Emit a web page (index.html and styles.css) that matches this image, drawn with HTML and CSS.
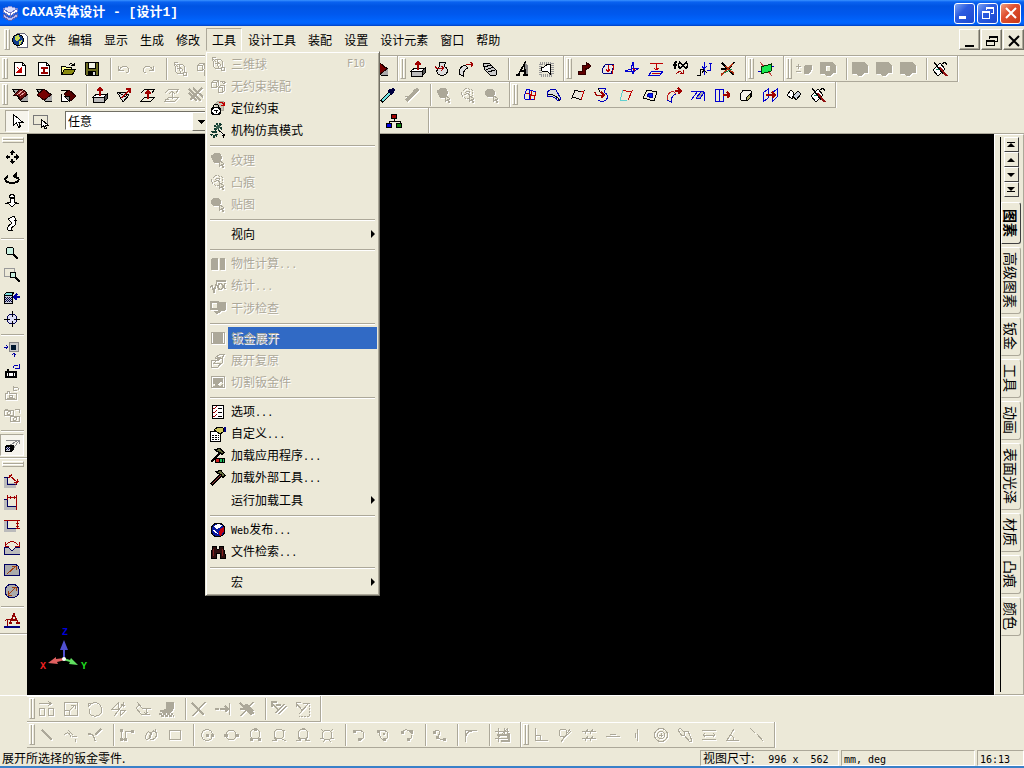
FILE: index.html
```html
<!DOCTYPE html>
<html lang="zh-CN">
<head>
  <meta charset="UTF-8" />
  <meta name="viewport" content="width=device-width, initial-scale=1.0"/>
  <title>CAXA实体设计 - [设计1]</title>
  <link rel="stylesheet" href="styles.css">
</head>
<body>
  <!-- icon sprite -->
  <svg class="sprite" aria-hidden="true">
    <symbol id="logo" viewBox="0 0 16 16"><path fill="#d8dcff" stroke="#8890d8" d="M1 4l7-3 7 3-7 4z"/><path fill="#fff" stroke="#7078c8" d="M1 4l7 4v3L1 7zM15 4L8 8v3l7-4z"/><path fill="#b8b8f0" stroke="#5860b0" d="M1 9l7 4 7-4v3l-7 4-7-4z"/></symbol>
    <symbol id="doc" viewBox="0 0 16 16"><path fill="#fff" stroke="#667" d="M5.500 1.500h7l3 3v11h-10z"/><circle cx="6" cy="8" r="5.500" fill="#123c8c" stroke="#000"/><path fill="#c8d850" stroke="none" d="M3 4l4-1 1 3-3 3-2-1zM7 9l3-1-1 4-2 1z"/></symbol>
    <symbol id="new" viewBox="0 0 16 16"><path fill="#fff" stroke="#000" d="M2.500 1.500h8l3 3v10h-11z"/><path stroke="#000" d="M10.500 1.500v3h3"/><path fill="#c00000" stroke="#c00000" d="M5 6l4 4M9.500 7v4h-4z"/></symbol>
    <symbol id="newi" viewBox="0 0 16 16"><path fill="#fff" stroke="#000" d="M2.500 1.500h8l3 3v10h-11z"/><path stroke="#000" d="M10.500 1.500v3h3"/><path stroke="#900" stroke-width="2" d="M4.500 6.500h7M8 6v6M4.500 12h7"/></symbol>
    <symbol id="open" viewBox="0 0 16 16"><path fill="#ffff90" stroke="#000" d="M1.500 13.500v-8h4l1 1h5v2"/><path fill="#8a8a10" stroke="#000" d="M1.500 13.500l3-5h11l-3 5z"/><path stroke="#000" d="M9 3.500q3-2 5 1m0-3v3h-3"/></symbol>
    <symbol id="save" viewBox="0 0 16 16"><path fill="#6a6a20" stroke="#000" d="M1.500 1.500h13v13h-12l-1-1z"/><path fill="#f4f4e8" stroke="#000" d="M4.500 1.500h7v6h-7z"/><path fill="#000" stroke="none" d="M4 10h8v5H4z"/><path fill="#ddd" stroke="none" d="M9 11h2v3H9z"/></symbol>
    <symbol id="undo" viewBox="0 0 16 16"><path d="M2.500 4.500v5h5M3 9q4-6 8-3 4 4-1 6"/></symbol>
    <symbol id="redo" viewBox="0 0 16 16"><path d="M13.500 4.500v5h-5M13 9Q9 3 5 6q-4 4 1 6"/></symbol>
    <symbol id="triball" viewBox="0 0 16 16"><circle cx="8" cy="8" r="5"/><path d="M2 5V1.500h4M2 2l4 4M5 8q4-3 6 2M8 4q-2 4 1 8M11 11h3v3h-3z"/></symbol>
    <symbol id="assemble" viewBox="0 0 16 16"><path d="M1.500 4.500h5v5h-5zM1.500 4.500l2-2h5v5l-2 2M6.500 4.500l2-2M8.500 9.500h4v5h-4zM8.500 9.500l2-2h4v5l-2 2M10 3.500h4v2M12 4l2 2 2-2"/></symbol>
    <symbol id="lock" viewBox="0 0 16 16"><path fill="#c8c4b4" stroke="#aca899" d="M5 4l3-3h5v9h-6"/><path stroke="#c00000" d="M9 3q3-2 5 2m0-3v3h-3"/><rect x="1.500" y="7.500" width="9" height="7" rx="3" fill="#fff" stroke="#000" stroke-width="1.500"/><path stroke="#000" d="M3.500 7q0-3 2.500-3t2.500 3M4 10.500h4M6 11v2"/></symbol>
    <symbol id="gears" viewBox="0 0 16 16"><circle cx="8" cy="5" r="3" stroke="#123c30" stroke-width="3" stroke-dasharray="2 1"/><circle cx="8" cy="5" r="2" fill="#386050" stroke="none"/><circle cx="4" cy="12" r="2.500" stroke="#123c30" stroke-width="2.500" stroke-dasharray="2 1"/><path fill="#fff" stroke="#000" d="M9.500 9l5 4-2 .5 1.500 2"/></symbol>
    <symbol id="texture" viewBox="0 0 16 16"><path fill="currentColor" d="M1 4l5-3 4 1 2 4-3 4H4z"/><path fill="#ece9d8" d="M9 8l5 4-2 .5 2 2.500-1 .5-2-2.500-1.500 1z"/></symbol>
    <symbol id="bump" viewBox="0 0 16 16"><path stroke-dasharray="2 1" d="M1 6l5-5 6 2 1 5-6 4-4-2z"/><path d="M5 6q3-4 5 0M4 8q4-3 6 0"/><path fill="#ece9d8" d="M9 8l5 4-2 .5 2 2.500-1 .5-2-2.500-1.500 1z"/></symbol>
    <symbol id="decal" viewBox="0 0 16 16"><ellipse cx="6" cy="6" rx="5" ry="4" fill="currentColor"/><path fill="#ece9d8" d="M9 8l5 4-2 .5 2 2.500-1 .5-2-2.500-1.500 1z"/></symbol>
    <symbol id="mass" viewBox="0 0 16 16"><path fill="currentColor" stroke="none" d="M1 3l2-1h5v12H1zM10 2h5v12h-5z"/></symbol>
    <symbol id="stats" viewBox="0 0 16 16"><path stroke-width="1.500" d="M0 9l2-1 2 6 3-11h9"/><path stroke-width="1.500" d="M15 5q-3 8-6 6-2-3 0-5 3-2 6 5"/></symbol>
    <symbol id="interfere" viewBox="0 0 16 16"><path stroke-width="1.500" d="M1 2h7v7H1z"/><path fill="currentColor" d="M8 3l2-1h5v8l-4 1-3-2zM4 11l3 3 5-4"/></symbol>
    <symbol id="unfold" viewBox="0 0 16 16"><path fill="currentColor" stroke="none" d="M3 3h10v10H3z"/><path d="M1 2.500h14M1 13.500h14M1.500 2v12M14.500 2v12"/></symbol>
    <symbol id="refold" viewBox="0 0 16 16"><path d="M5 6l5-4h5l-4 5zM1 8h6l-3 3h7l-3 4H1zM1 8v7M12 6v5l-3 3"/><path fill="currentColor" d="M8 5h3l-2 3H7z"/></symbol>
    <symbol id="cutsheet" viewBox="0 0 16 16"><path d="M1.500 2.500h13v11h-13z"/><path fill="currentColor" stroke="none" d="M3 4h10v5l-3-1-3 3-4-1zM3 12l4-1 3 1 3-2v3H3z"/></symbol>
    <symbol id="options" viewBox="0 0 16 16"><path fill="#fff" stroke="#000" d="M2.500 1.500h11v13h-11z"/><path stroke="#900" d="M3 4l1 1 3-3M3 8l1 1 3-3M3 12l1 1 3-3"/><path stroke="#000" d="M8 4.500h4M8 8.500h4M8 12.500h4"/></symbol>
    <symbol id="custom" viewBox="0 0 16 16"><path fill="#fff" stroke="#000" d="M.5 5.500h10v10H.5z"/><path stroke="#000" stroke-dasharray="2 1" d="M2 9.500h7M2 11.500h7M2 13.500h7"/><path fill="#d0c860" stroke="#000" d="M4 4l4-3 5 1v4l-3 2-3-2z"/><path stroke="#000080" stroke-width="2" d="M15 1v5"/></symbol>
    <symbol id="hammer" viewBox="0 0 16 16"><path stroke="#000" stroke-width="3" d="M1 15L11 5"/><path stroke="#a04040" d="M1.500 14.500L11 5"/><path fill="#687040" stroke="#000" d="M6 1.500l5-1 4 5-2 2-2-3-3-1z"/></symbol>
    <symbol id="loadapp" viewBox="0 0 16 16"><path stroke="#000" stroke-width="2" d="M1 14L10 5"/><path fill="#687040" stroke="#000" d="M5 1.500l5-1 4 4-2 2-2-2-3-1z"/><path fill="#d02020" stroke="#000" d="M5.500 10.500h4v4h-4z"/><path fill="#20c060" stroke="#000" d="M9.500 10.500h5v4h-5zM12 11v3"/></symbol>
    <symbol id="web" viewBox="0 0 16 16"><circle cx="8" cy="8" r="7" fill="#0818a0" stroke="#000"/><path fill="#fff" stroke="none" d="M4 4l4-2 4 1-2 3-4 1zM3 8l3 1 2 3-3-1z"/><path fill="#c00010" stroke="none" d="M10 7l4-2 .5 4-4 5-2-2z"/></symbol>
    <symbol id="find" viewBox="0 0 16 16"><path fill="#301010" stroke="#000" d="M3 2h3l1 3h2l1-3h3l2 8v4h-5v-5H6v5H1v-4z"/><path stroke="#802020" d="M4 5l-1 7M12 5l1 7"/></symbol>
    <symbol id="extrude" viewBox="0 0 16 16"><path fill="#fff" stroke="#000" d="M1 10l4-3h10l-3 3z"/><path fill="#bbb" stroke="#000" d="M1 10h11v5H1z"/><path fill="#555" stroke="#000" d="M12 10l3-3v5l-3 3z"/><path stroke="#a00000" stroke-width="2" d="M8 9V2M5 4l3-3 3 3"/></symbol>
    <symbol id="revolve" viewBox="0 0 16 16"><path fill="#ddd" stroke="#000" d="M5 1h7l-2 4q6 4 2 8-4 3-8 0-3-4 2-8z"/><path stroke="#a00000" d="M1 5q1 4 8 2m-2-2l3 2-3 3"/></symbol>
    <symbol id="revolveb" viewBox="0 0 16 16"><path stroke="#0000c0" d="M5 1h7l-2 4q6 4 2 8-4 3-8 0"/><path stroke="#000" d="M5 1q-1 2 1 4"/><path stroke="#a00000" stroke-width="1.500" d="M1 5q0 5 8 3m-2-3l3 3-3 3"/></symbol>
    <symbol id="sweep" viewBox="0 0 16 16"><path fill="#ddd" stroke="#000" d="M1 13q0-7 6-9l3 3q-5 2-5 8z"/><path stroke="#a00000" d="M8 4l7-1m-3-2l3 2-2 3"/></symbol>
    <symbol id="sweepb" viewBox="0 0 16 16"><path stroke="#c02020" d="M1 13q0-7 6-9l3 3"/><path stroke="#0000c0" d="M10 7q-5 2-5 8l-4-2"/><path stroke="#a00000" stroke-width="1.500" d="M9 4h6m-3-3l3 3-3 3"/></symbol>
    <symbol id="loft" viewBox="0 0 16 16"><path fill="#ccc" stroke="#000" d="M1 3l6-1 8 8-1 4-5 1-6-6z"/><path stroke="#000" d="M2 6l7-2M4 9l7-3M6 11l7-2"/></symbol>
    <symbol id="texta" viewBox="0 0 16 16"><path stroke="#000" stroke-width="1.500" d="M2 14h4M4 14L11 2v12M6 10h5M9 14h5"/><path fill="#888" stroke="none" d="M11 2l3 2v9h-2z"/></symbol>
    <symbol id="selshape" viewBox="0 0 16 16"><path stroke="#999" stroke-dasharray="1 1" stroke-width="3" d="M2 2h12v12H2z"/><path fill="#fff" stroke="#000" d="M3 6h3l4-3h2v10l-3-3H4z"/></symbol>
    <symbol id="bend" viewBox="0 0 16 16"><path fill="#600000" stroke="#300000" d="M2 10h4V4h4V1l5 4-5 4V7H9v6H2z"/></symbol>
    <symbol id="surface" viewBox="0 0 16 16"><path fill="#e8e8e8" stroke="#000080" d="M2 8l4-5 8 1-3 9-8-1z"/><path stroke="#c00000" d="M8 4v7M12 4l2 1-2 8M6 8l2 3 2-3"/></symbol>
    <symbol id="plane3" viewBox="0 0 16 16"><path stroke="#0000d0" d="M1 10l6-2 8-1-6 4zM7 8l2-7v12z"/><path stroke="#c00000" d="M9 7l2 3"/></symbol>
    <symbol id="project" viewBox="0 0 16 16"><path stroke="#c00000" d="M2 2.500h13M8 3v6M6 7l2 2 3-2"/><path stroke="#0000d0" d="M1 14l3-4h11l-3 4z"/><path stroke="#c00000" d="M4 12.500h8"/></symbol>
    <symbol id="fx" viewBox="0 0 16 16"><path stroke="#000" stroke-width="1.500" d="M5 1Q3 0 3 3v5M1 4h4M8 1Q5 4 8 8M9 2l4 5M13 2L9 7M14 1q3 3 0 7"/><path stroke="#a00000" d="M4 13q3-4 6-1m1-3v3H8"/></symbol>
    <symbol id="combine" viewBox="0 0 16 16"><path stroke="#0000d0" d="M8 1v13M6 5l2 3 3-3M11 9h3V2M13 2h3"/><path stroke="#000" d="M1 14h3V8h4M6 12l2-3 3 3"/></symbol>
    <symbol id="trim" viewBox="0 0 16 16"><path stroke="#000" stroke-width="1.500" d="M2 2l12 12M1 8h8L14 1"/><path stroke="#b03010" stroke-width="1.500" d="M1 14L13 3M6 5l3 4 5 3"/><path stroke="#108040" d="M4 12l8-4"/></symbol>
    <symbol id="green" viewBox="0 0 16 16"><path stroke="#c04040" d="M2 1l12 14"/><path stroke="#0000c0" d="M0 11l16-6"/><path fill="#18e850" stroke="#003800" d="M3 6l10-3v7L3 13z"/></symbol>
    <symbol id="plusminus" viewBox="0 0 16 16"><path d="M0 5.500h5M2.500 3v5M0 10.500h5"/><path fill="currentColor" d="M8 6l3-2h4v5l-2 3H8z"/></symbol>
    <symbol id="hollow" viewBox="0 0 16 16"><path fill="currentColor" stroke="none" fill-rule="evenodd" d="M0 1h12l4 3v8h-3l-2 3H6l-2-2H0zM6 5v5h4V5z"/></symbol>
    <symbol id="solid" viewBox="0 0 16 16"><path fill="currentColor" stroke="none" d="M0 1h12l4 3v8h-4l-2 3H6l-2-2H0z"/></symbol>
    <symbol id="sketch" viewBox="0 0 16 16"><path fill="#fff" stroke="#000" d="M1 9l7-7 5 6-7 7z"/><path stroke="#108060" d="M4 8h6v4"/><path stroke="#901010" stroke-width="2" d="M7 6l8 9"/><path stroke="#000" d="M2 1l9 12M9 4l4-3 2 3"/></symbol>
    <symbol id="fillet" viewBox="0 0 16 16"><path fill="#aaa" stroke="#000" d="M0 2h8l8 6v6H9z"/><path fill="#701010" stroke="#200" d="M2 8l6-6q8 2 7 6l-7 5q0-5-6-5z"/><path stroke="#e8a0a0" d="M5 8l6-5M8 9l5-4"/></symbol>
    <symbol id="chamfer" viewBox="0 0 16 16"><path fill="#aaa" stroke="#000" d="M0 2h8l8 6v6H9z"/><path fill="#780000" stroke="#200" d="M1 8l7-6 7 6-7 5z"/></symbol>
    <symbol id="shell" viewBox="0 0 16 16"><path fill="#fff" stroke="#000" d="M1 3h7M1 7v7h7"/><path fill="#580000" stroke="#200" d="M4 7l5-4 7 6-5 5z"/><path fill="#888" stroke="#000" d="M4 9h5v5z"/></symbol>
    <symbol id="draft" viewBox="0 0 16 16"><path fill="#ddd" stroke="#000" d="M1 5h7l4 5-5 5-3-5z"/><path stroke="#000" d="M8 5l5 3-6 7M2 5l8 5"/><path stroke="#a00000" stroke-width="1.500" d="M6 11l8-9m-4 0h4v4"/></symbol>
    <symbol id="offset" viewBox="0 0 16 16"><path stroke="#000" d="M1 6l4-4h10l-3 4M1 14l4-4h10l-4 4z"/><path stroke="#a00000" stroke-width="2" d="M8 12V5M5 7l3-3 3 3"/></symbol>
    <symbol id="offsetg" viewBox="0 0 16 16"><path d="M1 6l4-4h10l-3 4M1 14l4-4h10l-4 4zM8 12V5M5 7l3-3 3 3M1 12h4"/></symbol>
    <symbol id="hatch" viewBox="0 0 16 16"><path stroke-width="2" d="M1 2l12 12M5 1l10 9M1 6l8 8M14 1L2 13"/></symbol>
    <symbol id="brush" viewBox="0 0 16 16"><path stroke="#000" stroke-width="3" d="M1 15L10 6"/><path stroke="#70e0e0" stroke-width="1.500" d="M2 14L10 6"/><path stroke="#000040" stroke-width="3" d="M9 3l4 4M11 5l3-3"/></symbol>
    <symbol id="brushg" viewBox="0 0 16 16"><path stroke-width="3" d="M2 14l8-8M10 3l3 3M12 4l2-2"/><path d="M1 10l5-1"/></symbol>
    <symbol id="mesh" viewBox="0 0 16 16"><path stroke="#0000d0" d="M2 9l3-7 9 3-2 8-9-1zM8 3L7 13"/><path stroke="#c00000" d="M4 6l9 3M10 4l-2 9M14 5l-2 8"/></symbol>
    <symbol id="ruled" viewBox="0 0 16 16"><path fill="#ddd" stroke="#0000b0" d="M1 7q1-6 9-4l5 9-3 2q-4-6-10-4z"/><path stroke="#000" d="M2 8q7-2 12 6"/></symbol>
    <symbol id="bound" viewBox="0 0 16 16"><path fill="#e8e4d8" stroke="#000" d="M2 11l3-8q4 2 9 1l-3 9q-4-3-9-2z"/><path stroke="#c00000" d="M11 4h3l-3 9"/></symbol>
    <symbol id="cyan" viewBox="0 0 16 16"><path stroke="#60d0d0" d="M2 13l3-10M2 13h7"/><path stroke="#c00000" d="M5 3q4 2 9 1l-4 9"/></symbol>
    <symbol id="bluefill" viewBox="0 0 16 16"><path stroke="#000" d="M1 11l4-8 10 2-3 9z"/><path fill="#0020ff" stroke="#0000a0" d="M5 9l2-3 4 1-1 4z"/></symbol>
    <symbol id="vex" viewBox="0 0 16 16"><path fill="#aaa" stroke="#0000d0" d="M6 11l6-7 2 1-4 7z"/><path stroke="#0000d0" d="M1 4h11M1 13L8 4M14 5l1 9"/></symbol>
    <symbol id="boxarrow" viewBox="0 0 16 16"><path stroke="#0000d0" d="M1.500 2.500h8v12h-8zM5.500 3v11"/><path stroke="#a00000" stroke-width="2" d="M9 8h6m-2-3l3 3-3 3"/></symbol>
    <symbol id="curl" viewBox="0 0 16 16"><path fill="#f4f2e8" stroke="#000" d="M2 8l3-5 8 1v6l-4 4-6-1z"/><path fill="#b0b060" stroke="#000" d="M8 11l4-4v4l-3 3z"/></symbol>
    <symbol id="mirror" viewBox="0 0 16 16"><path stroke="#0000d0" d="M1 6l5-4v9l-5 4zM10 6l5-4v8l-5 5z"/><path stroke="#a00000" stroke-width="1.500" d="M4 8h8m-2-3l3 3-3 3"/></symbol>
    <symbol id="joint" viewBox="0 0 16 16"><path fill="#fff" stroke="#000" d="M1 8l4-5 3 3-2 6z"/><path fill="#c8d0dc" stroke="#000" d="M7 9l5-5 3 3-5 6z"/></symbol>
    <symbol id="tree" viewBox="0 0 16 16"><path stroke="#000" d="M8.500 5v4M3 11V8.500h11V11"/><path fill="#a00000" stroke="#000" d="M5.500 1.500h5v4h-5z"/><path fill="#0000e0" stroke="#000" d="M.5 10.500h5v4h-5z"/><path fill="#108010" stroke="#000" d="M10.500 10.500h5v4h-5z"/></symbol>
    <symbol id="arrow" viewBox="0 0 16 16"><path fill="#fff" stroke="#000" d="M4.500 1.500v11l3-3 2 5 2-1-2-4.500h4z"/></symbol>
    <symbol id="boxsel" viewBox="0 0 16 16"><path stroke="#777" d="M.5 2.500h14v9H.5z"/><path fill="#fff" stroke="#000" d="M8.500 6.500v8l2-2 1.500 3 1.500-.5-1.500-3h3z"/></symbol>
    <symbol id="pan" viewBox="0 0 16 16"><path fill="#000" stroke="none" d="M8 1l3 3H9v2H7V4H5zM8 15l3-3H9v-2H7v2H5zM1 8l3-3v2h2v2H4v2zM15 8l-3-3v2h-2v2h2v2z"/></symbol>
    <symbol id="orbit" viewBox="0 0 16 16"><path stroke="#000" stroke-width="2" d="M4 5q-5 3-1 6 5 2 10 0 4-3-1-5"/><path fill="#000" stroke="#000" d="M9 5l3-3v5z"/></symbol>
    <symbol id="fly" viewBox="0 0 16 16"><path fill="#fff" stroke="#000" d="M6.500 1h3l1 3h-5zM6 5h4v4h3l-5 5-5-5h3zM1 10l3 1M15 10l-3 1"/></symbol>
    <symbol id="walk" viewBox="0 0 16 16"><path fill="#fff" stroke="#000" d="M4 4l6-3 2 4h-2q4 3 0 6-3 1-2 4H4q-1-4 3-6 2-1-1-3z"/></symbol>
    <symbol id="zoom" viewBox="0 0 16 16"><circle cx="6" cy="6" r="4" fill="#c8f0e0" stroke="#000"/><path stroke="#000" stroke-width="2" d="M9 9l5 5"/></symbol>
    <symbol id="zoomwin" viewBox="0 0 16 16"><path stroke="#999" d="M.5 1.500h10v8H.5z"/><circle cx="9" cy="8" r="3" fill="#c8f0e0" stroke="#000"/><path stroke="#000" stroke-width="2" d="M11 10l5 5"/></symbol>
    <symbol id="lookat" viewBox="0 0 16 16"><path fill="#80e0e0" stroke="#000" d="M0 6l3-3h7L8 6z"/><path fill="#c8ccd8" stroke="#000" d="M.5 6.500h8v8h-8z"/><path stroke="#000040" stroke-dasharray="1 1" d="M1 8.500h7M2 9.500h6M1 10.500h7M2 11.500h6M1 12.500h7"/><path stroke="#0000a0" stroke-width="1.500" d="M16 8h-5m2-3l-3 3 3 3"/></symbol>
    <symbol id="target" viewBox="0 0 16 16"><circle cx="8" cy="8" r="5" fill="#ddddf4" stroke="#000050"/><path stroke="#000" d="M8 0v6M8 10v6M0 8h6M10 8h6"/></symbol>
    <symbol id="fit" viewBox="0 0 16 16"><path fill="#ccc" stroke="#888" d="M5.500 1.500h9v9h-9z"/><path fill="#001830" stroke="none" d="M7 4h5v5H7z"/><path stroke="#0000a0" d="M0 6h4M2 4l2 2-2 2M10 16v-4M8 14l2-2 2 2"/></symbol>
    <symbol id="cam" viewBox="0 0 16 16"><path fill="#000" stroke="none" d="M1 8h2V6h2v2h8v7H1z"/><circle cx="7" cy="11.500" r="2" fill="#fff" stroke="none"/><path fill="#fff" stroke="none" d="M3 10h1v3H3zM10 10h1v3h-1z"/><path stroke="#0000b0" d="M9 5q0-4 5-2m1-2v4h-4"/></symbol>
    <symbol id="camg" viewBox="0 0 16 16"><path d="M1.500 8.500h2v-2h2v2h7v6h-11zM3 13h8"/><circle cx="7" cy="11.500" r="1.500"/><path d="M15 5q0-4-5-2M9 1v4h4"/></symbol>
    <symbol id="cams" viewBox="0 0 16 16"><path d="M.5 3.500h9v5h-9zM1 2h3M11 2h4v4M6.500 9.500h9v5h-9z"/><circle cx="5" cy="6" r="1.500"/><circle cx="11" cy="12" r="1.500"/></symbol>
    <symbol id="persp" viewBox="0 0 16 16"><path stroke="#888" d="M2 3.500h13L9 12M15 3L4 9M15 3v4"/><path fill="#000" stroke="#000" d="M1 10l2-2h6v5l-2 2z"/><path fill="#c8ccd8" stroke="#000" d="M1.500 9.500h5v5h-5z"/><path stroke="#000040" stroke-dasharray="1 1" d="M2 10.500h4M3 11.500h3M2 12.500h4"/></symbol>
    <symbol id="dimalign" viewBox="0 0 16 16"><path fill="#bbb" stroke="none" d="M0 4h4v6h8v5H0z"/><path stroke="#000060" d="M0 4.500h3.500v7H13"/><path stroke="#a00000" d="M6 3l7 6M5 5V2h3M13 6v3h-3M11 12l4-4M4 5l4-4"/></symbol>
    <symbol id="dimh" viewBox="0 0 16 16"><path fill="#bbb" stroke="none" d="M0 5h4v7h8v3H0z"/><path stroke="#000060" d="M3.500 5v6.500H12M0 4.500h4"/><path stroke="#a00000" d="M3.500 0v5M12.500 0v15M4 2.500h8M6 1v3M10 1v3"/></symbol>
    <symbol id="dimv" viewBox="0 0 16 16"><path fill="#bbb" stroke="none" d="M0 4h4v7h8v4H0z"/><path stroke="#000060" d="M3.500 4v7.500H12"/><path stroke="#a00000" d="M0 3.500h16M12 11.500h4M13.500 4v8M12 6h3M12 9.500h3"/></symbol>
    <symbol id="dimang" viewBox="0 0 16 16"><path fill="#bbb" stroke="#000060" d="M0 8h4l4 4 4-4h4v7H0z"/><path stroke="#a00000" d="M2 6q6-7 12 0M1 3v4h4M15 3v4h-4"/></symbol>
    <symbol id="dimrad" viewBox="0 0 16 16"><path fill="#aaa" stroke="#000060" d="M0 3h10q5 1 5 5v6H0z"/><path stroke="#a04010" d="M3 13l9-8M8 5h4v4"/></symbol>
    <symbol id="dimdia" viewBox="0 0 16 16"><circle cx="8" cy="8" r="7" fill="#aaa" stroke="#000060"/><path stroke="#a04010" d="M4 12l8-8M8 4h4v4M4 8v4h4"/></symbol>
    <symbol id="note" viewBox="0 0 16 16"><path stroke="#900000" stroke-width="1.500" d="M6 10l4-9 4 9M8 7h5M5 10h3M12 10h4"/><path stroke="#900000" d="M3.500 13V6.500h4M1 8l2-2"/><path stroke="#000080" stroke-width="2" d="M0 14h16"/></symbol>
    <!-- sketch tools, drawn in the current colour -->
    <symbol id="s-move" viewBox="0 0 16 16"><path d="M0 2.500h11M9 0l3 2.500L9 5M.5 7.500h5v7h-5zM9.500 7.500h5v7h-5z"/></symbol>
    <symbol id="s-scale" viewBox="0 0 16 16"><path d="M1.500 1.500h13v13h-13zM1.500 9.500h5v5M6 10l6-6M8 4h4v4"/></symbol>
    <symbol id="s-rot" viewBox="0 0 16 16"><path d="M3 4q5-5 10 0 4 6-1 10-6 3-10-2V8M1 6V2h4z"/></symbol>
    <symbol id="s-mir" viewBox="0 0 16 16"><path d="M1 8l6-6v6zM3 15L13 2M9 9h6l-6 6zM10 3l4 2M12 1v5"/></symbol>
    <symbol id="s-off" viewBox="0 0 16 16"><path d="M2 1l5 6h9M1 7l5 6h9M1 7l3-3M11 8v4M9 11l2 2 2-2"/></symbol>
    <symbol id="s-proj" viewBox="0 0 16 16"><path fill="currentColor" d="M7 1h7v6H7zM6 8h8l-2 3H4z"/><path stroke-dasharray="3 1" stroke-width="2" d="M1 10h5M0 12.500h14M2 15h13"/></symbol>
    <symbol id="s-x" viewBox="0 0 16 16"><path stroke-width="1.500" d="M1 2l12 12M14 1L2 15"/></symbol>
    <symbol id="s-ext" viewBox="0 0 16 16"><path stroke-width="1.500" d="M0 8h4M5 8h9M14.500 2v12M10 5l3 3-3 3"/></symbol>
    <symbol id="s-cut" viewBox="0 0 16 16"><path stroke-width="1.500" d="M1 2l12 12M14 1L2 15M6 4l9 9M8 3l6 7M1 8h7"/></symbol>
    <symbol id="s-dim" viewBox="0 0 16 16"><path stroke-width="1.500" d="M1 2l6 7M8 13l7-8M5 12l8-9M1 6V1h5M5 4h5"/></symbol>
    <symbol id="s-dim2" viewBox="0 0 16 16"><path d="M1 2l6 7M1 6V1h5M4 13l9-10M8 2.500h7"/><path stroke-dasharray="2 1" d="M14.500 4v11H4"/></symbol>
    <symbol id="s-line" viewBox="0 0 16 16"><path stroke-width="1.500" d="M3 3l10 10"/></symbol>
    <symbol id="s-tan" viewBox="0 0 16 16"><path d="M1 8q5-5 7 2M5 3l5 5M9 10l5-1M12 12v3"/></symbol>
    <symbol id="s-norm" viewBox="0 0 16 16"><path stroke-width="1.500" d="M1 7q6-1 7 7M8 8l6-6"/></symbol>
    <symbol id="s-poly" viewBox="0 0 16 16"><path d="M2.500 3v10M2 12.500h4M6.500 13V4.500H12"/><path fill="currentColor" stroke="none" d="M1 2h3v3H1zM1 11h3v3H1zM5 11h3v3H5zM12 3h3v3h-3z"/></symbol>
    <symbol id="s-curve" viewBox="0 0 16 16"><path d="M3 8q2-5 5-2 1 4-4 7Q1 11 3 8zM7 8q2-6 6-3 2 5-4 8-4-1-2-5zM12 2v4"/></symbol>
    <symbol id="s-rect" viewBox="0 0 16 16"><path d="M2.500 3.500h11v9h-11z"/></symbol>
    <symbol id="s-c1" viewBox="0 0 16 16"><circle cx="8" cy="8" r="5.500"/><path fill="currentColor" d="M7 7h2v2H7zM12 7h2v2h-2z"/></symbol>
    <symbol id="s-c2" viewBox="0 0 16 16"><circle cx="8" cy="8" r="5"/><path fill="currentColor" d="M1 7h3v2H1zM12 7h3v2h-3z"/></symbol>
    <symbol id="s-c3" viewBox="0 0 16 16"><circle cx="8" cy="7" r="5"/><path fill="currentColor" d="M7 1h2v2H7zM3 11h2v2H3zM11 11h2v2h-2z"/></symbol>
    <symbol id="s-c4" viewBox="0 0 16 16"><circle cx="8" cy="7" r="5"/><path d="M1 13h5M3 10l3 4M11 12l4 2M12 4l2-1"/></symbol>
    <symbol id="s-c5" viewBox="0 0 16 16"><circle cx="8" cy="7" r="5"/><path d="M1 13h5M10 13h5M3 10l3 4M13 10l-3 4M7 1h3"/></symbol>
    <symbol id="s-c6" viewBox="0 0 16 16"><circle cx="8" cy="8" r="5"/><path d="M2 2l3 3M14 2l-3 3M1 12l4-1M11 11l4 1M4 15l2-2M12 15l-2-2"/></symbol>
    <symbol id="s-arc1" viewBox="0 0 16 16"><path d="M3 4q9-3 10 4 0 3-4 5"/><path fill="currentColor" stroke="none" d="M2 3h3v3H2zM7 11h3v3H7z"/></symbol>
    <symbol id="s-arc2" viewBox="0 0 16 16"><path d="M3 4q9-3 10 4 0 3-4 5-5-2-5-9"/><path fill="currentColor" stroke="none" d="M2 3h3v3H2zM8 11h3v3H8zM8 6h2v2H8z"/></symbol>
    <symbol id="s-arc3" viewBox="0 0 16 16"><path d="M3 5q2-3 5-2 6 2 5 5 0 3-3 5"/><path fill="currentColor" stroke="none" d="M2 4h3v3H2zM8 11h3v3H8zM11 3h3v3h-3z"/></symbol>
    <symbol id="s-spl" viewBox="0 0 16 16"><path d="M3 5q4-4 6 0-1 4-3 5 4 4 8 2"/><path fill="currentColor" stroke="none" d="M2 4h3v3H2zM5 9h3v3H5zM12 11h3v3h-3z"/></symbol>
    <symbol id="s-fil" viewBox="0 0 16 16"><path d="M2 3.500h12M2.500 3v12M3 9q1-5 6-5"/></symbol>
    <symbol id="s-grid" viewBox="0 0 16 16"><path d="M0 4.500h14M0 11.500h14M3.500 1v14M9 1v8M12 1v10M3 11l9-9"/><path stroke-width="2" d="M2 8h13M14 6v8H6"/></symbol>
    <symbol id="s-perp" viewBox="0 0 16 16"><path d="M2.500 1v12.500H15M2.500 8.500h5v5"/></symbol>
    <symbol id="s-tang" viewBox="0 0 16 16"><circle cx="6" cy="6" r="4"/><path d="M4 15L13 2M9 9l5-5"/></symbol>
    <symbol id="s-par" viewBox="0 0 16 16"><path d="M1 4.500h14M1 11.500h14M4 7l3-5M9 7l3-5M4 14l3-5M9 14l3-5"/></symbol>
    <symbol id="s-hor" viewBox="0 0 16 16"><path d="M1 9.500h14M5 7.500h6"/></symbol>
    <symbol id="s-ver" viewBox="0 0 16 16"><path d="M8.500 2v12M6.500 6v5"/></symbol>
    <symbol id="s-con" viewBox="0 0 16 16"><circle cx="8" cy="8" r="6.500"/><circle cx="8" cy="8" r="3.500"/><path d="M6 8h4M8 6v4"/></symbol>
    <symbol id="s-eqr" viewBox="0 0 16 16"><path d="M1 3l2-2 4 4 4-1 4 10-2 1L7 8 5 9zM7 5v4"/></symbol>
    <symbol id="s-eq" viewBox="0 0 16 16"><path d="M1 3.500h14M1 12.500h14M2 8h12M4 6L2 8l2 2M12 6l2 2-2 2"/></symbol>
    <symbol id="s-ang" viewBox="0 0 16 16"><path d="M9 2L2 13h12M5 8q4 1 4 5"/></symbol>
    <symbol id="s-col" viewBox="0 0 16 16"><path d="M1 1l5 5M8 7l6 7"/></symbol>
  </svg>

  <header class="titlebar">
    <svg class="icon"><use href="#logo"/></svg>
    <h1>CAXA实体设计 - [设计1]</h1>
    <div class="win-buttons">
      <button class="win" aria-label="最小化"><svg class="icon" viewBox="0 0 16 16"><path stroke="#fff" stroke-width="3" d="M2 12.500h7"/></svg></button>
      <button class="win" aria-label="还原"><svg class="icon" viewBox="0 0 16 16"><path stroke="#fff" d="M6.500 5V2.500h7v6H11M6 3.500h8M2.500 6.500h7v7h-7zM2 7.500h8"/></svg></button>
      <button class="win win-close" aria-label="关闭"><svg class="icon smooth" viewBox="0 0 16 16"><path stroke="#fff" stroke-width="2" d="M3 3l10 10M13 3L3 13"/></svg></button>
    </div>
  </header>

  <nav class="menubar">
    <span class="grip"></span>
    <svg class="icon"><use href="#doc"/></svg>
    <button class="menu">文件</button>
    <button class="menu">编辑</button>
    <button class="menu">显示</button>
    <button class="menu">生成</button>
    <button class="menu">修改</button>
    <div class="menu-wrap">
      <button class="menu open" aria-expanded="true">工具</button>
      <div class="popup" role="menu">
        <button class="item" disabled><svg class="icon"><use href="#triball"/></svg><span class="name">三维球</span><kbd>F10</kbd></button>
        <button class="item" disabled><svg class="icon"><use href="#assemble"/></svg><span class="name">无约束装配</span></button>
        <button class="item"><svg class="icon"><use href="#lock"/></svg><span class="name">定位约束</span></button>
        <button class="item"><svg class="icon"><use href="#gears"/></svg><span class="name">机构仿真模式</span></button>
        <hr>
        <button class="item" disabled><svg class="icon"><use href="#texture"/></svg><span class="name">纹理</span></button>
        <button class="item" disabled><svg class="icon"><use href="#bump"/></svg><span class="name">凸痕</span></button>
        <button class="item" disabled><svg class="icon"><use href="#decal"/></svg><span class="name">贴图</span></button>
        <hr>
        <button class="item sub"><span class="icon"></span><span class="name">视向</span></button>
        <hr>
        <button class="item" disabled><svg class="icon"><use href="#mass"/></svg><span class="name">物性计算<i>...</i></span></button>
        <button class="item" disabled><svg class="icon"><use href="#stats"/></svg><span class="name">统计<i>...</i></span></button>
        <button class="item" disabled><svg class="icon"><use href="#interfere"/></svg><span class="name">干涉检查</span></button>
        <hr>
        <button class="item selected" disabled><svg class="icon"><use href="#unfold"/></svg><span class="name">钣金展开</span></button>
        <button class="item" disabled><svg class="icon"><use href="#refold"/></svg><span class="name">展开复原</span></button>
        <button class="item" disabled><svg class="icon"><use href="#cutsheet"/></svg><span class="name">切割钣金件</span></button>
        <hr>
        <button class="item"><svg class="icon"><use href="#options"/></svg><span class="name">选项<i>...</i></span></button>
        <button class="item"><svg class="icon"><use href="#custom"/></svg><span class="name">自定义<i>...</i></span></button>
        <button class="item"><svg class="icon"><use href="#loadapp"/></svg><span class="name">加载应用程序<i>...</i></span></button>
        <button class="item"><svg class="icon"><use href="#hammer"/></svg><span class="name">加载外部工具<i>...</i></span></button>
        <button class="item sub"><span class="icon"></span><span class="name">运行加载工具</span></button>
        <hr>
        <button class="item"><svg class="icon"><use href="#web"/></svg><span class="name"><i>Web</i>发布<i>...</i></span></button>
        <button class="item"><svg class="icon"><use href="#find"/></svg><span class="name">文件检索<i>...</i></span></button>
        <hr>
        <button class="item sub"><span class="icon"></span><span class="name">宏</span></button>
      </div>
    </div>
    <button class="menu">设计工具</button>
    <button class="menu">装配</button>
    <button class="menu">设置</button>
    <button class="menu">设计元素</button>
    <button class="menu">窗口</button>
    <button class="menu">帮助</button>
    <div class="mdi-buttons">
      <button class="mdi" aria-label="最小化文档"><svg class="icon" viewBox="0 0 16 16"><path stroke="#000" stroke-width="2" d="M3 14h9"/></svg></button>
      <button class="mdi" aria-label="还原文档"><svg class="icon" viewBox="0 0 16 16"><path stroke="#000" d="M5.500 7V4.500h8v5H11M5 5.500h9M2.500 8.500h8v5h-8zM2 9.500h9"/></svg></button>
      <button class="mdi" aria-label="关闭文档"><svg class="icon smooth" viewBox="0 0 16 16"><path stroke="#000" stroke-width="2" d="M3 4l10 10M13 4L3 14"/></svg></button>
    </div>
  </nav>

  <div class="toolbar">
    <div class="band">
      <span class="grip"></span>
      <button class="tool" aria-label="新建设计"><svg class="icon"><use href="#new"/></svg></button>
      <button class="tool" aria-label="新建图纸"><svg class="icon"><use href="#newi"/></svg></button>
      <button class="tool" aria-label="打开"><svg class="icon"><use href="#open"/></svg></button>
      <button class="tool" aria-label="保存"><svg class="icon"><use href="#save"/></svg></button>
      <span class="sep"></span>
      <button class="tool" aria-label="撤销" disabled><svg class="icon"><use href="#undo"/></svg></button>
      <button class="tool" aria-label="重做" disabled><svg class="icon"><use href="#redo"/></svg></button>
      <span class="sep"></span>
      <button class="tool" aria-label="三维球" disabled><svg class="icon"><use href="#triball"/></svg></button>
      <button class="tool" aria-label="无约束装配" disabled><svg class="icon"><use href="#assemble"/></svg></button>
      <button class="tool" aria-label="定位约束"><svg class="icon"><use href="#lock"/></svg></button>
      <button class="tool" aria-label="机构仿真"><svg class="icon"><use href="#gears"/></svg></button>
      <span class="sep"></span>
      <button class="tool" aria-label="选项"><svg class="icon"><use href="#options"/></svg></button>
      <button class="tool" aria-label="自定义"><svg class="icon"><use href="#custom"/></svg></button>
      <button class="tool" aria-label="发布"><svg class="icon"><use href="#web"/></svg></button>
      <button class="tool" aria-label="检索"><svg class="icon"><use href="#find"/></svg></button>
      <button class="tool" aria-label="设计元素"><svg class="icon"><use href="#chamfer"/></svg></button>
    </div>
    <div class="band">
      <span class="grip"></span>
      <button class="tool" aria-label="拉伸"><svg class="icon"><use href="#extrude"/></svg></button>
      <button class="tool" aria-label="旋转"><svg class="icon"><use href="#revolve"/></svg></button>
      <button class="tool" aria-label="扫描"><svg class="icon"><use href="#sweep"/></svg></button>
      <button class="tool" aria-label="放样"><svg class="icon"><use href="#loft"/></svg></button>
      <span class="sep"></span>
      <button class="tool" aria-label="文字"><svg class="icon"><use href="#texta"/></svg></button>
      <button class="tool" aria-label="形状"><svg class="icon"><use href="#selshape"/></svg></button>
    </div>
    <div class="band">
      <span class="grip"></span>
      <button class="tool" aria-label="三维曲线"><svg class="icon"><use href="#bend"/></svg></button>
      <button class="tool" aria-label="曲面曲线"><svg class="icon"><use href="#surface"/></svg></button>
      <button class="tool" aria-label="相交曲线"><svg class="icon"><use href="#plane3"/></svg></button>
      <button class="tool" aria-label="投影曲线"><svg class="icon"><use href="#project"/></svg></button>
      <button class="tool" aria-label="公式曲线"><svg class="icon"><use href="#fx"/></svg></button>
      <button class="tool" aria-label="组合曲线"><svg class="icon"><use href="#combine"/></svg></button>
      <button class="tool" aria-label="裁剪曲线"><svg class="icon"><use href="#trim"/></svg></button>
    </div>
    <div class="band">
      <span class="grip"></span>
      <button class="tool" aria-label="基准面"><svg class="icon"><use href="#green"/></svg></button>
    </div>
    <div class="band">
      <span class="grip"></span>
      <button class="tool" aria-label="加减料" disabled><svg class="icon"><use href="#plusminus"/></svg></button>
      <button class="tool" aria-label="抽壳" disabled><svg class="icon"><use href="#hollow"/></svg></button>
      <span class="sep"></span>
      <button class="tool" aria-label="合并" disabled><svg class="icon"><use href="#solid"/></svg></button>
      <button class="tool" aria-label="求差" disabled><svg class="icon"><use href="#solid"/></svg></button>
      <button class="tool" aria-label="求交" disabled><svg class="icon"><use href="#solid"/></svg></button>
      <span class="sep"></span>
      <button class="tool" aria-label="编辑截面"><svg class="icon"><use href="#sketch"/></svg></button>
    </div>
  </div>

  <div class="toolbar">
    <div class="band">
      <span class="grip"></span>
      <button class="tool" aria-label="圆角"><svg class="icon"><use href="#fillet"/></svg></button>
      <button class="tool" aria-label="倒角"><svg class="icon"><use href="#chamfer"/></svg></button>
      <button class="tool" aria-label="抽壳"><svg class="icon"><use href="#shell"/></svg></button>
      <span class="sep"></span>
      <button class="tool" aria-label="表面移动"><svg class="icon"><use href="#extrude"/></svg></button>
      <button class="tool" aria-label="拔模"><svg class="icon"><use href="#draft"/></svg></button>
      <button class="tool" aria-label="表面等距"><svg class="icon"><use href="#offset"/></svg></button>
      <button class="tool" aria-label="匹配" disabled><svg class="icon"><use href="#offsetg"/></svg></button>
      <button class="tool" aria-label="删除表面" disabled><svg class="icon"><use href="#hatch"/></svg></button>
      <button class="tool" aria-label="分割"><svg class="icon"><use href="#bound"/></svg></button>
      <button class="tool" aria-label="缝合"><svg class="icon"><use href="#curl"/></svg></button>
      <button class="tool" aria-label="镜像"><svg class="icon"><use href="#mirror"/></svg></button>
      <button class="tool" aria-label="连接"><svg class="icon"><use href="#joint"/></svg></button>
      <button class="tool" aria-label="放样"><svg class="icon"><use href="#loft"/></svg></button>
      <button class="tool" aria-label="旋转"><svg class="icon"><use href="#revolve"/></svg></button>
      <button class="tool" aria-label="扫描"><svg class="icon"><use href="#sweep"/></svg></button>
      <button class="tool" aria-label="提取属性"><svg class="icon"><use href="#brush"/></svg></button>
      <button class="tool" aria-label="应用属性" disabled><svg class="icon"><use href="#brushg"/></svg></button>
      <span class="sep"></span>
      <button class="tool" aria-label="纹理" disabled><svg class="icon"><use href="#texture"/></svg></button>
      <button class="tool" aria-label="凸痕" disabled><svg class="icon"><use href="#bump"/></svg></button>
      <button class="tool" aria-label="贴图" disabled><svg class="icon"><use href="#decal"/></svg></button>
    </div>
    <div class="band">
      <span class="grip"></span>
      <button class="tool" aria-label="网格面"><svg class="icon"><use href="#mesh"/></svg></button>
      <button class="tool" aria-label="直纹面"><svg class="icon"><use href="#ruled"/></svg></button>
      <button class="tool" aria-label="边界面"><svg class="icon"><use href="#bound"/></svg></button>
      <button class="tool" aria-label="旋转面"><svg class="icon"><use href="#revolveb"/></svg></button>
      <button class="tool" aria-label="提取曲面"><svg class="icon"><use href="#cyan"/></svg></button>
      <button class="tool" aria-label="填充面"><svg class="icon"><use href="#bluefill"/></svg></button>
      <button class="tool" aria-label="导动面"><svg class="icon"><use href="#sweepb"/></svg></button>
      <button class="tool" aria-label="过渡面"><svg class="icon"><use href="#vex"/></svg></button>
      <button class="tool" aria-label="延伸面"><svg class="icon"><use href="#boxarrow"/></svg></button>
      <button class="tool" aria-label="偏移面"><svg class="icon"><use href="#curl"/></svg></button>
      <button class="tool" aria-label="镜像面"><svg class="icon"><use href="#mirror"/></svg></button>
      <button class="tool" aria-label="合并面"><svg class="icon"><use href="#joint"/></svg></button>
      <button class="tool" aria-label="裁剪面"><svg class="icon"><use href="#sketch"/></svg></button>
    </div>
  </div>

  <div class="toolbar last">
    <div class="band pick">
      <button class="tool pressed" aria-label="选择"><svg class="icon"><use href="#arrow"/></svg></button>
      <button class="tool" aria-label="框选"><svg class="icon"><use href="#boxsel"/></svg></button>
      <span class="combo">
        <select aria-label="选择过滤">
          <option>任意</option>
        </select>
      </span>
      <span class="spacer"></span>
      <button class="tool" aria-label="设计树"><svg class="icon"><use href="#tree"/></svg></button>
    </div>
  </div>

  <main class="work">
    <aside class="side">
      <div class="vband">
        <span class="vgrip"></span>
        <button class="tool" aria-label="平移"><svg class="icon"><use href="#pan"/></svg></button>
        <button class="tool" aria-label="动态旋转"><svg class="icon"><use href="#orbit"/></svg></button>
        <button class="tool" aria-label="前后缩放"><svg class="icon"><use href="#fly"/></svg></button>
        <button class="tool" aria-label="漫游"><svg class="icon"><use href="#walk"/></svg></button>
        <span class="vsep"></span>
        <button class="tool" aria-label="缩放"><svg class="icon"><use href="#zoom"/></svg></button>
        <button class="tool" aria-label="窗口缩放"><svg class="icon"><use href="#zoomwin"/></svg></button>
        <button class="tool" aria-label="指定面"><svg class="icon"><use href="#lookat"/></svg></button>
        <button class="tool" aria-label="指定视向点"><svg class="icon"><use href="#target"/></svg></button>
        <span class="vsep"></span>
        <button class="tool" aria-label="显示全部"><svg class="icon"><use href="#fit"/></svg></button>
        <button class="tool" aria-label="保存视向"><svg class="icon"><use href="#cam"/></svg></button>
        <button class="tool" aria-label="恢复视向" disabled><svg class="icon"><use href="#camg"/></svg></button>
        <button class="tool" aria-label="取消视向" disabled><svg class="icon"><use href="#cams"/></svg></button>
        <span class="vsep"></span>
        <button class="tool pressed" aria-label="透视"><svg class="icon"><use href="#persp"/></svg></button>
      </div>
      <div class="vband">
        <span class="vgrip"></span>
        <button class="tool" aria-label="智能标注"><svg class="icon"><use href="#dimalign"/></svg></button>
        <button class="tool" aria-label="水平标注"><svg class="icon"><use href="#dimh"/></svg></button>
        <button class="tool" aria-label="垂直标注"><svg class="icon"><use href="#dimv"/></svg></button>
        <button class="tool" aria-label="角度标注"><svg class="icon"><use href="#dimang"/></svg></button>
        <button class="tool" aria-label="半径标注"><svg class="icon"><use href="#dimrad"/></svg></button>
        <button class="tool" aria-label="直径标注"><svg class="icon"><use href="#dimdia"/></svg></button>
        <span class="vsep"></span>
        <button class="tool" aria-label="文字标注"><svg class="icon"><use href="#note"/></svg></button>
      </div>
    </aside>

    <section class="viewport">
      <svg class="triad" viewBox="0 0 52 48">
        <path fill="#5050d0" d="M23 33V23h-3l4-10 4 10h-3v10z"/>
        <path fill="#e06060" d="M24 31l-8 1v-2l-8 6 10 1-1-2 8-2z"/>
        <path fill="#60e060" d="M24 31l6 2 1-2 7 7-9-1 1-2-7-2z"/>
        <circle fill="#fff" cx="24" cy="32" r="2"/>
        <text x="22" y="8" fill="#0000d8">Z</text>
        <text x="0" y="42" fill="#f02020">X</text>
        <text x="41" y="42" fill="#20e020">Y</text>
      </svg>
    </section>

    <aside class="catalog">
      <div class="pager">
        <button aria-label="第一页"><svg viewBox="0 0 12 12"><path d="M2 3h8v1H2zM6 4l4 4H2z"/></svg></button>
        <button aria-label="上一页"><svg viewBox="0 0 12 12"><path d="M6 4l4 4H2z"/></svg></button>
        <button aria-label="下一页"><svg viewBox="0 0 12 12"><path d="M2 4h8L6 8z"/></svg></button>
        <button aria-label="最后一页"><svg viewBox="0 0 12 12"><path d="M2 3h8L6 7zM2 7h8v1H2z"/></svg></button>
      </div>
      <div class="tabs" role="tablist">
        <button class="tab active" role="tab">图素</button>
        <button class="tab" role="tab">高级图素</button>
        <button class="tab" role="tab">钣金</button>
        <button class="tab" role="tab">工具</button>
        <button class="tab" role="tab">动画</button>
        <button class="tab" role="tab">表面光泽</button>
        <button class="tab" role="tab">材质</button>
        <button class="tab" role="tab">凸痕</button>
        <button class="tab" role="tab">颜色</button>
      </div>
    </aside>
  </main>

  <div class="toolbar bottom">
    <div class="band">
      <span class="grip"></span>
      <button class="tool" aria-label="移动曲线" disabled><svg class="icon"><use href="#s-move"/></svg></button>
      <button class="tool" aria-label="缩放曲线" disabled><svg class="icon"><use href="#s-scale"/></svg></button>
      <button class="tool" aria-label="旋转曲线" disabled><svg class="icon"><use href="#s-rot"/></svg></button>
      <button class="tool" aria-label="镜像曲线" disabled><svg class="icon"><use href="#s-mir"/></svg></button>
      <button class="tool" aria-label="等距" disabled><svg class="icon"><use href="#s-off"/></svg></button>
      <button class="tool" aria-label="投影" disabled><svg class="icon"><use href="#s-proj"/></svg></button>
      <span class="sep"></span>
      <button class="tool" aria-label="打断" disabled><svg class="icon"><use href="#s-x"/></svg></button>
      <button class="tool" aria-label="延伸" disabled><svg class="icon"><use href="#s-ext"/></svg></button>
      <button class="tool" aria-label="裁剪" disabled><svg class="icon"><use href="#s-cut"/></svg></button>
      <span class="sep"></span>
      <button class="tool" aria-label="显示尺寸" disabled><svg class="icon"><use href="#s-dim"/></svg></button>
      <button class="tool" aria-label="显示端点" disabled><svg class="icon"><use href="#s-dim2"/></svg></button>
    </div>
  </div>
  <div class="toolbar bottom">
    <div class="band">
      <span class="grip"></span>
      <button class="tool" aria-label="两点线" disabled><svg class="icon"><use href="#s-line"/></svg></button>
      <button class="tool" aria-label="切线" disabled><svg class="icon"><use href="#s-tan"/></svg></button>
      <button class="tool" aria-label="法线" disabled><svg class="icon"><use href="#s-norm"/></svg></button>
      <span class="sep"></span>
      <button class="tool" aria-label="连续直线" disabled><svg class="icon"><use href="#s-poly"/></svg></button>
      <button class="tool" aria-label="多边形" disabled><svg class="icon"><use href="#s-curve"/></svg></button>
      <button class="tool" aria-label="长方形" disabled><svg class="icon"><use href="#s-rect"/></svg></button>
      <span class="sep"></span>
      <button class="tool" aria-label="圆心半径" disabled><svg class="icon"><use href="#s-c1"/></svg></button>
      <button class="tool" aria-label="两点圆" disabled><svg class="icon"><use href="#s-c2"/></svg></button>
      <button class="tool" aria-label="三点圆" disabled><svg class="icon"><use href="#s-c3"/></svg></button>
      <button class="tool" aria-label="一切点圆" disabled><svg class="icon"><use href="#s-c4"/></svg></button>
      <button class="tool" aria-label="二切点圆" disabled><svg class="icon"><use href="#s-c5"/></svg></button>
      <button class="tool" aria-label="三切点圆" disabled><svg class="icon"><use href="#s-c6"/></svg></button>
      <span class="sep"></span>
      <button class="tool" aria-label="两端点弧" disabled><svg class="icon"><use href="#s-arc1"/></svg></button>
      <button class="tool" aria-label="圆心弧" disabled><svg class="icon"><use href="#s-arc2"/></svg></button>
      <button class="tool" aria-label="三点弧" disabled><svg class="icon"><use href="#s-arc3"/></svg></button>
      <span class="sep"></span>
      <button class="tool" aria-label="样条" disabled><svg class="icon"><use href="#s-spl"/></svg></button>
      <span class="sep"></span>
      <button class="tool" aria-label="圆角过渡" disabled><svg class="icon"><use href="#s-fil"/></svg></button>
      <span class="sep"></span>
      <button class="tool" aria-label="构造" disabled><svg class="icon"><use href="#s-grid"/></svg></button>
    </div>
    <div class="band">
      <span class="grip"></span>
      <button class="tool" aria-label="垂直约束" disabled><svg class="icon"><use href="#s-perp"/></svg></button>
      <button class="tool" aria-label="相切约束" disabled><svg class="icon"><use href="#s-tang"/></svg></button>
      <button class="tool" aria-label="平行约束" disabled><svg class="icon"><use href="#s-par"/></svg></button>
      <button class="tool" aria-label="水平约束" disabled><svg class="icon"><use href="#s-hor"/></svg></button>
      <button class="tool" aria-label="竖直约束" disabled><svg class="icon"><use href="#s-ver"/></svg></button>
      <button class="tool" aria-label="同心约束" disabled><svg class="icon"><use href="#s-con"/></svg></button>
      <button class="tool" aria-label="尺寸约束" disabled><svg class="icon"><use href="#s-eqr"/></svg></button>
      <button class="tool" aria-label="等长约束" disabled><svg class="icon"><use href="#s-eq"/></svg></button>
      <button class="tool" aria-label="角度约束" disabled><svg class="icon"><use href="#s-ang"/></svg></button>
      <button class="tool" aria-label="共线约束" disabled><svg class="icon"><use href="#s-col"/></svg></button>
    </div>
  </div>

  <footer class="status">
    <span class="hint">展开所选择的钣金零件.</span>
    <span class="cell size">视图尺寸:<i>996 x  562</i></span>
    <span class="cell units"><i>mm, deg</i></span>
    <span class="cell clock"><i>16:13</i></span>
  </footer>
</body>
</html>
```
FILE: styles.css
```css
* {
  box-sizing: border-box;
}

body {
  margin: 0;
  height: 100vh;
  display: flex;
  flex-direction: column;
  overflow: hidden;
  background-color: #ece9d8;
  color: #000;
  font-family: "Noto Sans CJK SC", sans-serif;
  font-size: 12px;
  line-height: 16px;
}

button {
  margin: 0;
  padding: 0;
  border: none;
  background: none;
  color: inherit;
  font: inherit;
}

/* half-width latin text */
i,
kbd {
  font-family: "DejaVu Sans Mono", monospace;
  font-size: 10px;
  font-style: normal;
}

.sprite {
  position: absolute;
  width: 0;
  height: 0;
}

.icon {
  display: block;
  flex: none;
  width: 16px;
  height: 16px;
  fill: none;
  stroke: currentColor;
  shape-rendering: crispEdges;
}

.icon.smooth {
  shape-rendering: auto;
}

/* title bar */
.titlebar {
  flex: none;
  display: flex;
  align-items: center;
  height: 26px;
  padding: 0 3px 0 2px;
  background: linear-gradient(#3a93ff 0, #0a62f0 2px, #0054e3 6px, #0058ee 14px, #0066ff 22px, #0060f8 24px, #0040c0 26px);
  color: #fff;
}

.titlebar h1 {
  margin: 0 auto 0 4px;
  font-family: "Liberation Mono", "Noto Sans CJK SC", monospace;
  font-size: 13px;
  font-weight: bold;
  white-space: pre;
}

.win-buttons,
.mdi-buttons {
  display: flex;
  gap: 2px;
}

.win {
  display: flex;
  align-items: center;
  justify-content: center;
  width: 21px;
  height: 21px;
  border: 1px solid #fff;
  border-radius: 3px;
  background: linear-gradient(135deg, #7ca4f4, #2c5ce0 40%, #1c48d0);
}

.win-close {
  background: linear-gradient(135deg, #f0a080, #e05030 40%, #c83818);
}

/* menu bar */
.menubar {
  flex: none;
  display: flex;
  align-items: center;
  height: 30px;
  padding: 0 0 2px 2px;
  border-bottom: 1px solid #aca899;
}

.menubar > .icon {
  margin-left: 2px;
}

.menubar > .icon + .menu {
  margin-left: -2px;
}

.menu {
  height: 23px;
  padding: 0 5px;
  border: 1px solid transparent;
}

.menu.open {
  border-color: #aca899 #fff transparent #aca899;
}

.menu-wrap {
  position: relative;
}

.mdi-buttons {
  margin-left: auto;
  gap: 1px;
}

.mdi {
  display: flex;
  align-items: center;
  justify-content: center;
  width: 21px;
  height: 21px;
  border: 1px solid;
  border-color: #fff #716f64 #716f64 #fff;
  box-shadow: inset -1px -1px 0 #aca899;
}

.popup {
  position: absolute;
  z-index: 10;
  top: 100%;
  left: -1px;
  width: 175px;
  padding: 1px 2px 2px;
  border: 1px solid;
  border-color: #ece9d8 #716f64 #716f64 #ece9d8;
  background-color: #ece9d8;
  box-shadow: inset 1px 1px 0 #fff, inset -1px -1px 0 #aca899;
}

.item {
  display: flex;
  align-items: center;
  width: 100%;
  height: 22px;
  padding: 0 0 0 2px;
  text-align: left;
}

.item .name {
  flex: 1;
  margin-left: 2px;
  padding-left: 3px;
  line-height: 22px;
}

.item kbd {
  margin-right: 12px;
}

.item:disabled,
.tool:disabled {
  color: #aca899;
}

.item:disabled .name,
.item:disabled kbd {
  text-shadow: 1px 1px 0 #fff;
}

.item:disabled .icon,
.tool:disabled .icon {
  filter: drop-shadow(1px 1px 0 #fff);
}

.item.selected .name {
  background-color: #316ac5;
  color: #aca899;
  text-shadow: 1px 1px 0 #fff;
}

.item.sub::after {
  content: "";
  margin-right: 2px;
  border: 4px solid transparent;
  border-right: none;
  border-left: 4px solid #000;
}

.popup hr {
  height: 2px;
  margin: 4px 2px 2px;
  border: none;
  border-top: 1px solid #aca899;
  background-color: #fff;
}

/* toolbars */
.toolbar {
  flex: none;
  display: flex;
  height: 26px;
}

.toolbar.last {
  border-bottom: 1px solid #aca899;
}

.toolbar.bottom {
  padding-left: 27px;
}

.band {
  display: flex;
  align-items: center;
  padding-right: 5px;
  border-right: 1px solid #aca899;
  border-bottom: 1px solid #aca899;
  box-shadow: inset 0 1px 0 #fff, 1px 0 0 #fff;
}

.toolbar.last .band {
  border-bottom: none;
}

.grip {
  flex: none;
  width: 6px;
  height: 21px;
  margin-left: 2px;
  border: 1px solid;
  border-color: #fff #aca899 #aca899 #fff;
  background: linear-gradient(90deg, #ece9d8 1px, #aca899 1px, #aca899 2px, #fff 2px, #fff 3px, #ece9d8 3px);
}

.tool {
  flex: none;
  display: flex;
  align-items: center;
  justify-content: center;
  width: 24px;
  height: 22px;
}

.tool.pressed {
  border: 1px solid;
  border-color: #aca899 #fff #fff #aca899;
  background-color: #f6f4ec;
}

.sep {
  flex: none;
  width: 2px;
  height: 22px;
  margin-left: 6px;
  border-left: 1px solid #aca899;
  background-color: #fff;
}

.band.pick {
  width: 429px;
  padding: 0 22px 0 5px;
}

.combo {
  position: relative;
  width: 146px;
  margin-left: 12px;
}

.combo select {
  display: block;
  width: 100%;
  height: 19px;
  padding: 0 2px;
  border: 1px solid;
  border-color: #716f64 #fff #fff #716f64;
  border-radius: 0;
  background-color: #fff;
  color: #000;
  font: inherit;
  line-height: 17px;
  appearance: none;
}

.combo::after {
  content: "";
  position: absolute;
  top: 1px;
  right: 1px;
  width: 16px;
  height: 17px;
  border: 1px solid;
  border-color: #fff #716f64 #716f64 #fff;
  background: conic-gradient(from -45deg at 50% 100%, #000 90deg, #ece9d8 90deg) center / 7px 4px no-repeat #ece9d8;
  pointer-events: none;
}

.spacer {
  flex: 1;
}

/* work area */
.work {
  flex: 1;
  display: flex;
  min-height: 0;
  border-bottom: 1px solid #fff;
}

.side {
  flex: none;
  width: 27px;
}

.vband {
  display: flex;
  flex-direction: column;
  padding-bottom: 1px;
  border-bottom: 1px solid #aca899;
  box-shadow: 0 1px 0 #fff;
}

.vgrip {
  height: 6px;
  margin: 3px 3px 3px 2px;
  border: 1px solid;
  border-color: #fff #aca899 #aca899 #fff;
  background: linear-gradient(#ece9d8 1px, #aca899 1px, #aca899 2px, #fff 2px, #fff 3px, #ece9d8 3px);
}

.vsep {
  height: 2px;
  margin: 4px 3px 2px 1px;
  border-top: 1px solid #aca899;
  background-color: #fff;
}

.viewport {
  flex: 1;
  display: flex;
  align-items: flex-end;
  padding: 0 0 20px 13px;
  background-color: #000;
}

.triad {
  width: 52px;
  height: 48px;
  font-family: "Liberation Mono", monospace;
  font-size: 10px;
  font-weight: bold;
}

/* catalog tabs */
.catalog {
  flex: none;
  width: 30px;
  padding: 2px 2px 2px 5px;
  border: 1px solid;
  border-color: #fff #aca899 #aca899 #fff;
}

.pager {
  display: flex;
  flex-direction: column;
  padding-left: 3px;
  border-left: 1px solid #000;
}

.pager button {
  width: 15px;
  height: 15px;
  border: 1px solid;
  border-color: #fff #404040 #404040 #fff;
}

.pager svg {
  display: block;
  width: 12px;
  height: 12px;
}

.tabs {
  display: flex;
  flex-direction: column;
  gap: 3px;
  height: 495px;
  padding-top: 5px;
  border-left: 1px solid #000;
}

/* labels run down the tab, turned a quarter clockwise */
.tab {
  width: 20px;
  padding: 4px 0 5px;
  border: 1px solid;
  border-color: #fff #aca899 #aca899 transparent;
  border-radius: 0 3px 3px 0;
  font-size: 14px;
  line-height: 18px;
  writing-mode: vertical-rl;
  text-orientation: sideways;
}

.tab.active {
  padding: 6px 0;
  border-color: #fff #404040 #404040 #fff;
  font-weight: bold;
}

/* status bar */
.status {
  flex: none;
  display: flex;
  gap: 2px;
  height: 20px;
  border-bottom: 2px solid #3a80c8;
  white-space: pre;
}

.hint {
  flex: 1;
  padding: 2px;
}

.cell {
  margin-top: 2px;
  padding: 0 2px;
  border: 1px solid;
  border-color: #aca899 #fff #fff #aca899;
  line-height: 14px;
}

.size {
  width: 139px;
}

.size i {
  margin-left: 14px;
}

.units {
  width: 134px;
}

.clock {
  width: 47px;
}
```
